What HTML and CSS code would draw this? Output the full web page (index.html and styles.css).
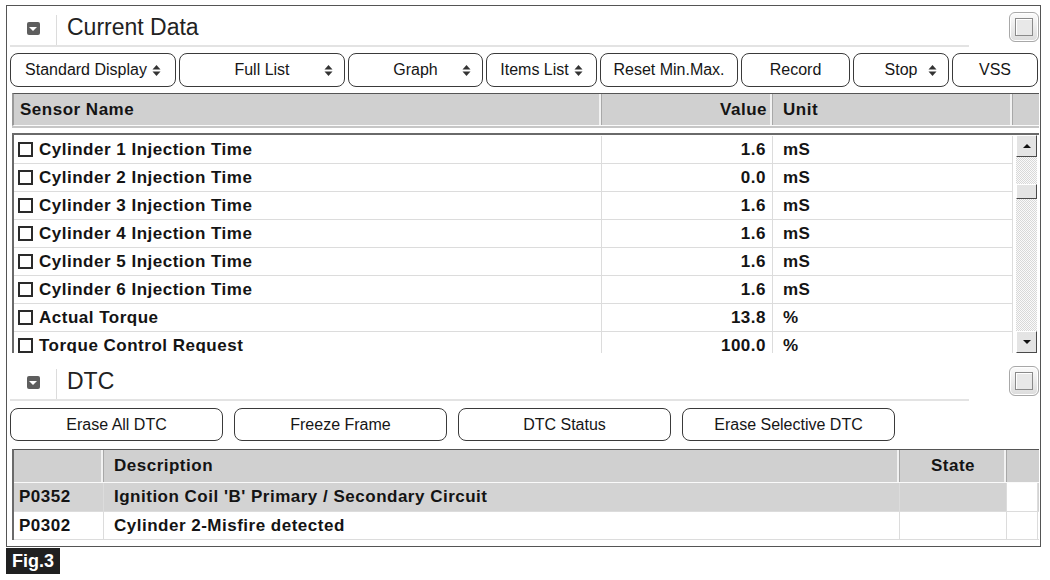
FILE: index.html
```html
<!DOCTYPE html>
<html lang="en">
  <head>
    <meta charset="UTF-8" />
    <meta content="width=device-width, initial-scale=1.0" name="viewport" />
    <link rel="stylesheet" href="styles.css">
  </head>
  <body>
    <div class="frame">
      <!-- Current Data -->
      <div class="sec-head">
        <div class="title-bar">
          <div class="toggle"><span class="toggle-ico"></span></div>
          <div class="title">Current Data</div>
        </div>
        <div class="max-btn"><span></span></div>
      </div>

      <div class="toolbar">
        <button class="btn" style="width:166px">Standard Display <svg class="updown" viewBox="0 0 9 13"><polygon points="0.5,5.5 4.5,1 8.5,5.5" /><polygon points="0.5,7.5 4.5,12 8.5,7.5" /></svg></button>
        <button class="btn spread" style="width:166px"><span></span><span>Full List</span><svg class="updown" viewBox="0 0 9 13"><polygon points="0.5,5.5 4.5,1 8.5,5.5" /><polygon points="0.5,7.5 4.5,12 8.5,7.5" /></svg></button>
        <button class="btn spread" style="width:135px"><span></span><span>Graph</span><svg class="updown" viewBox="0 0 9 13"><polygon points="0.5,5.5 4.5,1 8.5,5.5" /><polygon points="0.5,7.5 4.5,12 8.5,7.5" /></svg></button>
        <button class="btn" style="width:111px">Items List <svg class="updown" viewBox="0 0 9 13"><polygon points="0.5,5.5 4.5,1 8.5,5.5" /><polygon points="0.5,7.5 4.5,12 8.5,7.5" /></svg></button>
        <button class="btn" style="width:138px">Reset Min.Max.</button>
        <button class="btn" style="width:109px">Record</button>
        <button class="btn spread" style="width:96px"><span></span><span>Stop</span><svg class="updown" viewBox="0 0 9 13"><polygon points="0.5,5.5 4.5,1 8.5,5.5" /><polygon points="0.5,7.5 4.5,12 8.5,7.5" /></svg></button>
        <button class="btn" style="width:86px">VSS</button>
      </div>

      <div class="table">
        <div class="grid-head sensor-cols">
          <div class="c-name">Sensor Name</div>
          <div class="c-val">Value</div>
          <div class="c-unit">Unit</div>
          <div class="c-end"></div>
        </div>
        <div class="data-box">
          <div class="rows">
            <div class="row sensor-cols"><div class="c-name"><i class="chk"></i>Cylinder 1 Injection Time</div><div class="c-val">1.6</div><div class="c-unit">mS</div></div>
            <div class="row sensor-cols"><div class="c-name"><i class="chk"></i>Cylinder 2 Injection Time</div><div class="c-val">0.0</div><div class="c-unit">mS</div></div>
            <div class="row sensor-cols"><div class="c-name"><i class="chk"></i>Cylinder 3 Injection Time</div><div class="c-val">1.6</div><div class="c-unit">mS</div></div>
            <div class="row sensor-cols"><div class="c-name"><i class="chk"></i>Cylinder 4 Injection Time</div><div class="c-val">1.6</div><div class="c-unit">mS</div></div>
            <div class="row sensor-cols"><div class="c-name"><i class="chk"></i>Cylinder 5 Injection Time</div><div class="c-val">1.6</div><div class="c-unit">mS</div></div>
            <div class="row sensor-cols"><div class="c-name"><i class="chk"></i>Cylinder 6 Injection Time</div><div class="c-val">1.6</div><div class="c-unit">mS</div></div>
            <div class="row sensor-cols"><div class="c-name"><i class="chk"></i>Actual Torque</div><div class="c-val">13.8</div><div class="c-unit">%</div></div>
            <div class="row sensor-cols"><div class="c-name"><i class="chk"></i>Torque Control Request</div><div class="c-val">100.0</div><div class="c-unit">%</div></div>
          </div>
          <div class="vscroll">
            <div class="sb-btn up"></div>
            <div class="sb-track"><div class="sb-thumb"></div></div>
            <div class="sb-btn down"></div>
          </div>
        </div>
      </div>

      <!-- DTC -->
      <div class="sec-head dtc-head">
        <div class="title-bar">
          <div class="toggle"><span class="toggle-ico"></span></div>
          <div class="title">DTC</div>
        </div>
        <div class="max-btn"><span></span></div>
      </div>

      <div class="toolbar dtc-bar">
        <button class="btn">Erase All DTC</button>
        <button class="btn">Freeze Frame</button>
        <button class="btn">DTC Status</button>
        <button class="btn">Erase Selective DTC</button>
      </div>

      <div class="table dtc-table">
        <div class="grid-head dtc-cols">
          <div class="c-code"></div>
          <div class="c-desc">Description</div>
          <div class="c-state">State</div>
          <div class="c-end"></div>
        </div>
        <div class="dtc-row dtc-cols sel"><div class="c-code">P0352</div><div class="c-desc">Ignition Coil 'B' Primary / Secondary Circuit</div><div class="c-state"></div><div class="c-end"></div></div>
        <div class="dtc-row dtc-cols"><div class="c-code">P0302</div><div class="c-desc">Cylinder 2-Misfire detected</div><div class="c-state"></div><div class="c-end"></div></div>
      </div>
    </div>
    <div class="fig">Fig.3</div>
  </body>
</html>
```

FILE: styles.css
```css
body {
  margin: 0;
  background: #fff;
  color: #141414;
  font-family: "Liberation Sans", Arial, sans-serif;
}
.frame {
  margin: 5px 0 0 6px;
  width: 1035px;
  height: 542px;
  box-sizing: border-box;
  border: 1px solid #555;
}

/* section header */
.sec-head {
  display: flex;
  height: 41px;
}
.dtc-head {
  margin-top: 7px;
}
.title-bar {
  flex: 1;
  display: flex;
  margin-left: 3px;
  border-bottom: 2px solid #e3e3e3;
}
.toggle {
  width: 46px;
  padding-top: 5px;
  display: flex;
  align-items: center;
  justify-content: center;
}
.toggle-ico {
  width: 13px;
  height: 13px;
  background: #5e5e5e;
  border-radius: 2px;
  display: flex;
  align-items: center;
  justify-content: center;
}
.toggle-ico::after {
  content: "";
  margin-top: 2px;
  border-left: 4px solid transparent;
  border-right: 4px solid transparent;
  border-top: 4px solid #fff;
}
.title {
  margin-top: 9px;
  padding: 0 0 6px 10px;
  border-left: 1px solid #dcdcdc;
  font-size: 23px;
  color: #222;
  display: flex;
  align-items: center;
}
.max-btn {
  width: 30px;
  height: 30px;
  margin: 6px 1px 0 40px;
  box-sizing: border-box;
  border: 1px solid #a8a8a8;
  border-radius: 6px;
  background: linear-gradient(#fbfbfb, #dcdcdc);
  box-shadow: inset 0 0 0 1px #fff;
  display: flex;
  align-items: center;
  justify-content: center;
}
.max-btn span {
  width: 18px;
  height: 18px;
  box-sizing: border-box;
  border: 1px solid #8a8a8a;
  background: #e8e8e8;
  box-shadow: inset 1px 1px 0 #fff;
}

/* buttons */
.toolbar {
  display: flex;
  gap: 3px;
  height: 34px;
  margin: 6px 0 0 3px;
}
.dtc-bar {
  gap: 11px;
  height: 33px;
  margin-top: 7px;
}
.dtc-bar .btn {
  width: 213px;
}
.btn {
  box-sizing: border-box;
  padding: 0;
  border: 1px solid #3a3a3a;
  border-radius: 8px;
  background: #fff;
  color: #161616;
  font-family: inherit;
  font-size: 16px;
  display: flex;
  align-items: center;
  justify-content: center;
  gap: 5px;
}
.btn.spread {
  display: grid;
  grid-template-columns: 1fr auto 1fr;
  gap: 0;
}
.btn.spread .updown {
  justify-self: end;
  margin-right: 11px;
}
.updown {
  width: 9px;
  height: 13px;
  fill: #333;
}

/* tables */
.table {
  margin: 6px 1px 0 5px;
}
.dtc-table {
  margin-top: 8px;
  border-left: 2px solid #6a6a6a;
}
.sensor-cols {
  display: grid;
  grid-template-columns: 588px 171px 240px 25px;
}
.dtc-cols {
  display: grid;
  grid-template-columns: 90px 796px 107px 31px;
}
.grid-head {
  height: 31px;
  background: #d0d0d0;
  border-top: 1px solid #555;
  border-bottom: 1px solid #fafafa;
  box-shadow: 0 2px 0 #c6c6c6;
  font-weight: bold;
  font-size: 17px;
  letter-spacing: 0.5px;
}
.sensor-cols.grid-head {
  border-left: 2px solid #9a9a9a;
}
.dtc-table .grid-head {
  height: 32px;
  box-shadow: none;
}
.grid-head > div {
  display: flex;
  align-items: center;
  border-right: 1px solid #a8a8a8;
  box-shadow: inset -2px 0 0 #f2f2f2;
}
.grid-head > div:last-child {
  border-right: 0;
  box-shadow: none;
}
.c-name {
  padding-left: 6px;
}
.c-val {
  justify-content: flex-end;
  padding-right: 6px;
}
.c-unit {
  padding-left: 10px;
}
.grid-head .c-val {
  padding-right: 5px;
}
.c-code {
  padding-left: 5px;
}
.c-desc {
  padding-left: 10px;
}
.grid-head .c-state {
  justify-content: center;
}

.data-box {
  display: flex;
  height: 220px;
  box-sizing: border-box;
  margin-top: 7px;
  border-top: 2px solid #6a6a6a;
  border-left: 2px solid #6a6a6a;
  overflow: hidden;
}
.rows {
  width: 999px;
  padding-top: 1px;
}
.row {
  grid-template-columns: 588px 171px 240px;
  height: 28px;
  box-sizing: border-box;
  border-bottom: 1px solid #dcdcdc;
  font-weight: bold;
  font-size: 17px;
  letter-spacing: 0.5px;
}
.row > div {
  display: flex;
  align-items: center;
  border-right: 1px solid #dcdcdc;
}
.row .c-name {
  padding-left: 4px;
}
.chk {
  width: 15px;
  height: 15px;
  box-sizing: border-box;
  border: 2px solid #2a2a2a;
  margin-right: 6px;
}

.vscroll {
  width: 21px;
  margin: 0 1px 0 3px;
  display: flex;
  flex-direction: column;
}
.sb-btn,
.sb-thumb {
  box-sizing: border-box;
  background: #e4e4e4;
  border: 1px solid;
  border-color: #fff #4a4a4a #4a4a4a #fff;
}
.sb-btn {
  height: 22px;
  display: flex;
  align-items: center;
  justify-content: center;
}
.sb-btn::after {
  content: "";
  border-left: 4px solid transparent;
  border-right: 4px solid transparent;
}
.sb-btn.up::after {
  border-bottom: 4px solid #111;
}
.sb-btn.down::after {
  border-top: 4px solid #111;
}
.sb-track {
  flex: 1;
  background: repeating-conic-gradient(#d8d8d8 0 25%, #fafafa 0 50%) 0 0 / 2px 2px;
}
.sb-thumb {
  height: 15px;
  margin-top: 27px;
}

.dtc-row {
  height: 29px;
  box-sizing: border-box;
  border-bottom: 1px solid #dcdcdc;
  font-weight: bold;
  font-size: 17px;
  letter-spacing: 0.5px;
}
.dtc-row + .dtc-row {
  height: 28px;
}
.dtc-row > div {
  display: flex;
  align-items: center;
  border-right: 1px solid #dcdcdc;
}
.dtc-row.sel {
  background: #d3d3d3;
}
.dtc-row.sel .c-end {
  background: #fff;
}

.fig {
  margin: 1px 0 0 6px;
  width: 54px;
  height: 26px;
  background: #202020;
  color: #fff;
  font-weight: bold;
  font-size: 18px;
  display: flex;
  align-items: center;
  justify-content: center;
}
```
